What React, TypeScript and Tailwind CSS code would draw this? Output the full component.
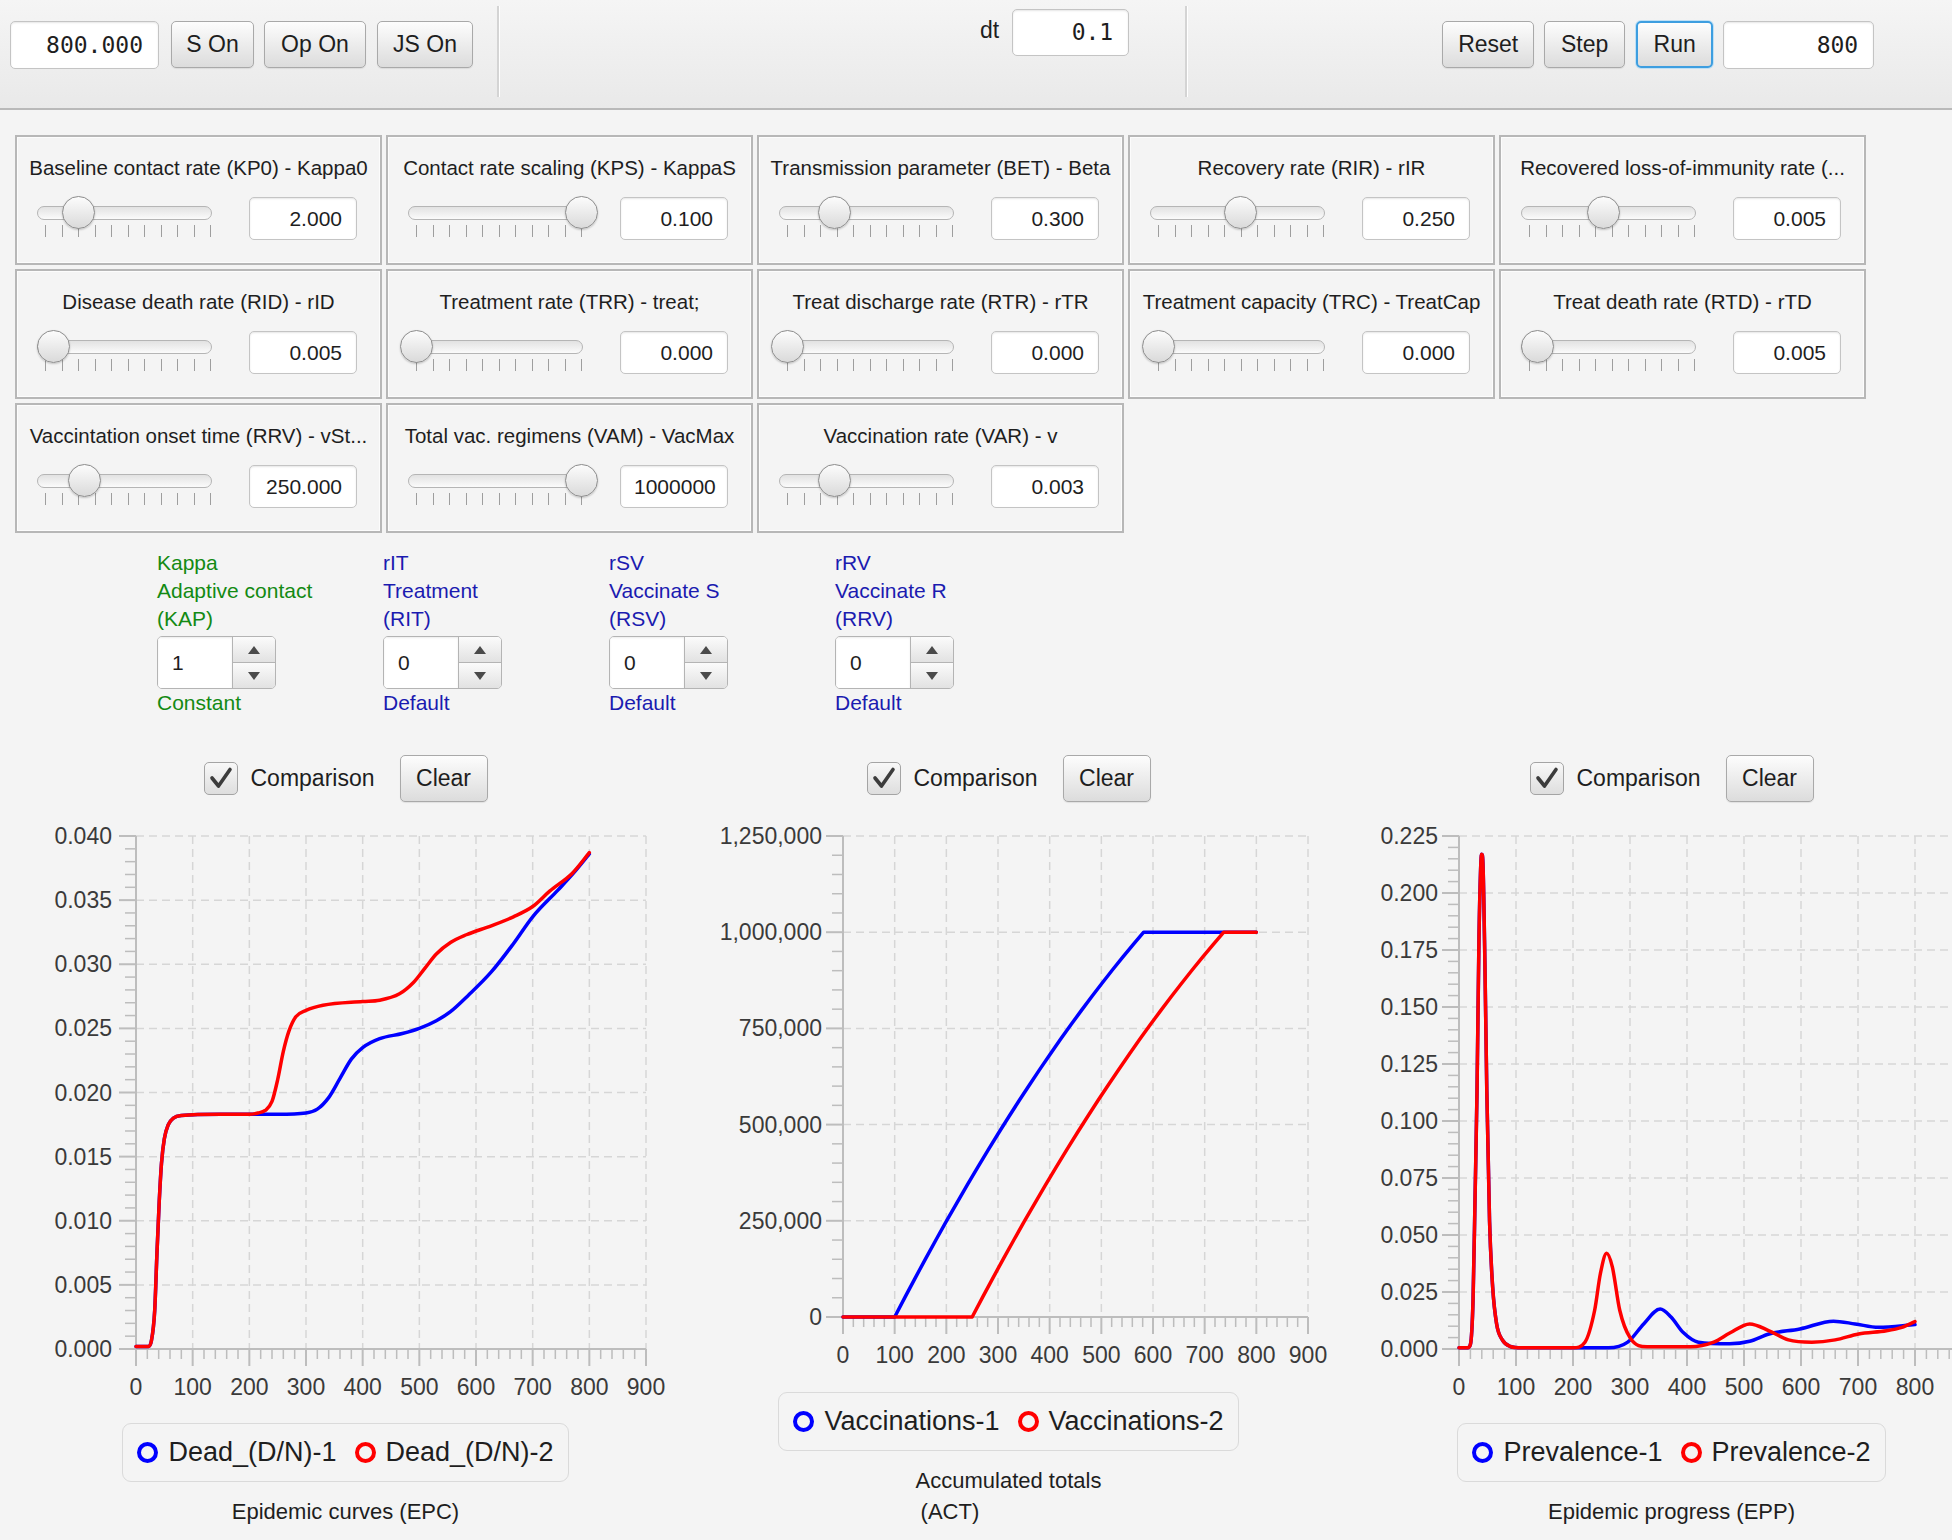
import React from 'react';

type Pt = [number, number];

interface Part {
  pts: Pt[];
  linear?: boolean;
}

interface Series {
  color: string;
  parts: Part[];
}

interface ChartDef {
  id: string;
  height: number;
  axisX: number;
  plotRight: number;
  plotTop: number;
  plotBottom: number;
  labelRight: number;
  xLabelMax: number;
  yMax: number;
  yStep: number;
  fmt: (v: number) => string;
  series: Series[];
  legend: string[];
  title: string[];
}

const panels = [
  { title: 'Baseline contact rate (KP0) - Kappa0', value: '2.000', frac: 0.2 },
  { title: 'Contact rate scaling (KPS) - KappaS', value: '0.100', frac: 1 },
  { title: 'Transmission parameter (BET) - Beta', value: '0.300', frac: 0.29 },
  { title: 'Recovery rate (RIR) - rIR', value: '0.250', frac: 0.5 },
  { title: 'Recovered loss-of-immunity rate (...', value: '0.005', frac: 0.45 },
  { title: 'Disease death rate (RID) - rID', value: '0.005', frac: 0.05 },
  { title: 'Treatment rate (TRR) - treat;', value: '0.000', frac: 0 },
  { title: 'Treat discharge rate (RTR) - rTR', value: '0.000', frac: 0 },
  { title: 'Treatment capacity (TRC) - TreatCap', value: '0.000', frac: 0 },
  { title: 'Treat death rate (RTD) - rTD', value: '0.005', frac: 0.05 },
  { title: 'Vaccintation onset time (RRV) - vSt...', value: '250.000', frac: 0.24 },
  { title: 'Total vac. regimens (VAM) - VacMax', value: '1000000', frac: 1, clip: true },
  { title: 'Vaccination rate (VAR) - v', value: '0.003', frac: 0.29 },
];

const spinners = [
  { lines: ['Kappa', 'Adaptive contact', '(KAP)'], value: '1', foot: 'Constant', green: true },
  { lines: ['rIT', 'Treatment', '(RIT)'], value: '0', foot: 'Default', green: false },
  { lines: ['rSV', 'Vaccinate S', '(RSV)'], value: '0', foot: 'Default', green: false },
  { lines: ['rRV', 'Vaccinate R', '(RRV)'], value: '0', foot: 'Default', green: false },
];

const firstPeak: Pt[] = [
  [0, 0.0005], [15, 0.0006], [20, 0.002], [24.7, 0.022], [28.2, 0.067], [31.6, 0.113],
  [35.1, 0.181], [38.5, 0.214], [40, 0.217], [42, 0.213], [45.4, 0.17], [48.8, 0.113],
  [53.6, 0.056], [59.1, 0.027], [66, 0.011], [76, 0.004], [90, 0.0011], [110, 0.0005],
];

const deadStart: Pt[] = [
  [0, 0.0002], [22, 0.0002], [27, 0.0006], [33, 0.003], [37, 0.0075], [41, 0.0115],
  [45, 0.0145], [50, 0.0164], [57, 0.0175], [66, 0.018], [80, 0.0182], [150, 0.0183], [200, 0.0183],
];

// slightly concave ramp from (x0, 0) to (x1, 1M)
function ramp(x0: number, x1: number): Pt[] {
  const a = 1.25;
  const pts: Pt[] = [];
  for (let i = 0; i <= 24; i++) {
    const u = i / 24;
    pts.push([x0 + u * (x1 - x0), 1000000 * (a * u + (1 - a) * u * u)]);
  }
  return pts;
}

const charts: ChartDef[] = [
  {
    id: 'epc',
    height: 590,
    axisX: 122,
    plotRight: 632,
    plotTop: 16,
    plotBottom: 529,
    labelRight: 98,
    xLabelMax: 900,
    yMax: 0.04,
    yStep: 0.005,
    fmt: (v) => v.toFixed(3),
    series: [
      {
        color: '#0000ff',
        parts: [
          {
            pts: [
              ...deadStart,
              [250, 0.0183], [300, 0.0184], [320, 0.0187], [340, 0.0196], [360, 0.0211], [380, 0.0226],
              [400, 0.0235], [430, 0.0242], [470, 0.0246], [500, 0.025], [530, 0.0256], [555, 0.0263],
              [587, 0.0276], [627, 0.0294], [666, 0.0316], [700, 0.0337], [745, 0.0358], [772, 0.0371], [800, 0.0386],
            ],
          },
        ],
      },
      {
        color: '#ff0000',
        parts: [
          {
            pts: [
              ...deadStart,
              [215, 0.0184], [228, 0.0186], [240, 0.0193], [250, 0.021], [260, 0.0232], [270, 0.0248],
              [282, 0.0259], [300, 0.0264], [330, 0.0268], [400, 0.0271], [430, 0.0272], [465, 0.0277],
              [490, 0.0286], [510, 0.0297], [530, 0.0308], [555, 0.0317], [583, 0.0323], [627, 0.033],
              [666, 0.0337], [700, 0.0345], [730, 0.0357], [770, 0.0371], [800, 0.0387],
            ],
          },
        ],
      },
    ],
    legend: ['Dead_(D/N)-1', 'Dead_(D/N)-2'],
    title: ['Epidemic curves (EPC)'],
  },
  {
    id: 'act',
    height: 559,
    axisX: 166,
    plotRight: 631,
    plotTop: 16,
    plotBottom: 497,
    labelRight: 145,
    xLabelMax: 900,
    yMax: 1250000,
    yStep: 250000,
    fmt: (v) => Math.round(v).toLocaleString('en-US'),
    series: [
      {
        color: '#0000ff',
        parts: [{ linear: true, pts: [[0, 0], ...ramp(100, 582), [800, 1000000]] }],
      },
      {
        color: '#ff0000',
        parts: [{ linear: true, pts: [[0, 0], ...ramp(250, 737), [800, 1000000]] }],
      },
    ],
    legend: ['Vaccinations-1', 'Vaccinations-2'],
    title: ['Accumulated totals', '(ACT)'],
  },
  {
    id: 'epp',
    height: 590,
    axisX: 119,
    plotRight: 632,
    plotTop: 16,
    plotBottom: 529,
    labelRight: 98,
    xLabelMax: 800,
    yMax: 0.225,
    yStep: 0.025,
    fmt: (v) => v.toFixed(3),
    series: [
      {
        color: '#0000ff',
        parts: [
          {
            pts: [
              ...firstPeak,
              [262, 0.0005], [296, 0.003], [324, 0.011], [353, 0.0175], [372, 0.014], [393, 0.0073],
              [420, 0.003], [475, 0.0023], [510, 0.0034], [544, 0.0066], [598, 0.0088], [657, 0.0122],
              [695, 0.011], [736, 0.0095], [800, 0.0107],
            ],
          },
        ],
      },
      {
        color: '#ff0000',
        parts: [
          {
            pts: [
              ...firstPeak,
              [200, 0.0005], [221, 0.003], [238, 0.017], [248, 0.033], [259, 0.042], [269, 0.036],
              [282, 0.017], [300, 0.005], [330, 0.001], [406, 0.001], [447, 0.003], [475, 0.007],
              [510, 0.011], [544, 0.008], [578, 0.004], [619, 0.003], [660, 0.004], [701, 0.0066],
              [750, 0.008], [777, 0.0095], [800, 0.012],
            ],
          },
        ],
      },
    ],
    legend: ['Prevalence-1', 'Prevalence-2'],
    title: ['Epidemic progress (EPP)'],
  },
];

// monotone cubic through pixel points
function monotonePath(pts: Pt[]): string {
  const n = pts.length;
  const xs = pts.map((p) => p[0]);
  const ys = pts.map((p) => p[1]);
  const m: number[] = [];
  for (let i = 0; i < n - 1; i++) m.push((ys[i + 1] - ys[i]) / (xs[i + 1] - xs[i]));
  const t: number[] = new Array(n).fill(0);
  t[0] = m[0];
  t[n - 1] = m[n - 2];
  for (let i = 1; i < n - 1; i++) t[i] = m[i - 1] * m[i] <= 0 ? 0 : (m[i - 1] + m[i]) / 2;
  for (let i = 0; i < n - 1; i++) {
    if (Math.abs(m[i]) < 1e-9) {
      t[i] = 0;
      t[i + 1] = 0;
      continue;
    }
    const a = t[i] / m[i];
    const b = t[i + 1] / m[i];
    const s = a * a + b * b;
    if (s > 9) {
      const k = 3 / Math.sqrt(s);
      t[i] = k * a * m[i];
      t[i + 1] = k * b * m[i];
    }
  }
  let d = `M${xs[0]},${ys[0]}`;
  for (let i = 0; i < n - 1; i++) {
    const h = (xs[i + 1] - xs[i]) / 3;
    d += ` C${xs[i] + h},${ys[i] + t[i] * h} ${xs[i + 1] - h},${ys[i + 1] - t[i + 1] * h} ${xs[i + 1]},${ys[i + 1]}`;
  }
  return d;
}

const Button: React.FC<{ label: string; className?: string }> = ({ label, className = '' }) => (
  <div
    className={`flex h-[47px] items-center justify-center rounded-[5px] border border-[#a9a9a9] bg-linear-to-b from-[#fdfdfd] to-[#dcdcdc] text-[23px] text-[#1e1e1e] shadow-[0_1px_1px_rgba(0,0,0,0.08)] ${className}`}
  >
    {label}
  </div>
);

const Slider: React.FC<{ frac: number }> = ({ frac }) => {
  const left = 8 + frac * 165 - 16.5;
  return (
    <div className="relative w-[175px] pt-[10px]">
      <div className="h-[14px] w-[175px] rounded-full border border-[#b5b5b5] bg-linear-to-b from-[#e2e2e2] to-[#fbfbfb]" />
      <div className="ml-[8px] mt-[5px] flex h-[12px] w-[166px] justify-between">
        {Array.from({ length: 11 }).map((_, i) => (
          <div key={i} className="h-full w-px bg-[#9e9e9e]" />
        ))}
      </div>
      <div
        className="absolute top-0 h-[33px] w-[33px] rounded-full border border-[#8c8c8c] bg-linear-to-b from-[#fcfcfc] to-[#dadada] shadow-[0_1px_2px_rgba(0,0,0,0.2)]"
        style={{ left }}
      />
    </div>
  );
};

const Panel: React.FC<{ title: string; value: string; frac: number; clip?: boolean }> = ({ title, value, frac, clip }) => (
  <div className="h-[130px] w-[367px] border-2 border-[#b7b7b7] bg-[#f4f4f4] pt-[19px] shadow-[inset_0_0_0_1px_#fcfcfc]">
    <div className="h-[24px] overflow-hidden whitespace-nowrap text-center text-[20.5px] leading-[24px] text-[#1e1e1e]">{title}</div>
    <div className="flex items-start pl-[20px]">
      <div className="mt-[16px]">
        <Slider frac={frac} />
      </div>
      <div
        className={`ml-[37px] mt-[17px] flex h-[43px] w-[108px] items-center overflow-hidden rounded-[5px] border border-[#c4c4c4] bg-white text-[21px] text-[#1e1e1e] shadow-[inset_0_1px_2px_rgba(0,0,0,0.1)] ${
          clip ? 'justify-start pl-[13px]' : 'justify-end pr-[14px]'
        }`}
      >
        <span className="whitespace-nowrap">{value}</span>
      </div>
    </div>
  </div>
);

const Spinner: React.FC<{ lines: string[]; value: string; foot: string; green: boolean }> = ({ lines, value, foot, green }) => (
  <div className={`w-[226px] text-[21px] leading-[28px] ${green ? 'text-[#138a13]' : 'text-[#1b1bb0]'}`}>
    {lines.map((l) => (
      <div key={l}>{l}</div>
    ))}
    <div className="mt-[3px] flex h-[53px] w-[119px] overflow-hidden rounded-[5px] border border-[#b4b4b4]">
      <div className="flex flex-1 items-center bg-white pl-[14px] text-[#1e1e1e] shadow-[inset_0_1px_2px_rgba(0,0,0,0.08)]">{value}</div>
      <div className="flex w-[43px] flex-col border-l border-[#b4b4b4]">
        <div className="flex flex-1 items-center justify-center border-b border-[#b4b4b4] bg-linear-to-b from-[#fbfbfb] to-[#e2e2e2]">
          <svg width="14" height="10" viewBox="0 0 14 10">
            <polygon points="7,1 13,9 1,9" fill="#4a4a4a" />
          </svg>
        </div>
        <div className="flex flex-1 items-center justify-center bg-linear-to-b from-[#fbfbfb] to-[#e2e2e2]">
          <svg width="14" height="10" viewBox="0 0 14 10">
            <polygon points="1,1 13,1 7,9" fill="#4a4a4a" />
          </svg>
        </div>
      </div>
    </div>
    <div>{foot}</div>
  </div>
);

const Chart: React.FC<{ c: ChartDef }> = ({ c }) => {
  const sx = (v: number) => c.axisX + (v / 900) * (c.plotRight - c.axisX);
  const sy = (v: number) => c.plotBottom - (v / c.yMax) * (c.plotBottom - c.plotTop);
  const nY = Math.round(c.yMax / c.yStep);
  const xMajor = Array.from({ length: 10 }, (_, i) => i * 100);
  const xMinor = Array.from({ length: 46 }, (_, i) => i * 20).filter((v) => v % 100 !== 0);
  const yMajor = Array.from({ length: nY + 1 }, (_, i) => i * c.yStep);
  const yMinor: number[] = [];
  for (let i = 0; i < nY * 5; i++) if (i % 5 !== 0) yMinor.push((i * c.yStep) / 5);
  const axisColor = '#bdbdbd';
  return (
    <svg width={663} height={c.height} className="block">
      {yMajor.slice(1).map((v) => (
        <line key={`gy${v}`} x1={c.axisX} x2={c.plotRight} y1={sy(v)} y2={sy(v)} stroke="#d6d6d6" strokeWidth={1.5} strokeDasharray="8 5" />
      ))}
      {xMajor.slice(1).map((v) => (
        <line key={`gx${v}`} x1={sx(v)} x2={sx(v)} y1={c.plotTop} y2={c.plotBottom} stroke="#d6d6d6" strokeWidth={1.5} strokeDasharray="8 5" />
      ))}
      <line x1={c.axisX} x2={c.axisX} y1={c.plotTop} y2={c.plotBottom} stroke={axisColor} strokeWidth={2} />
      <line x1={c.axisX} x2={c.plotRight} y1={c.plotBottom} y2={c.plotBottom} stroke={axisColor} strokeWidth={2} />
      {yMajor.map((v) => (
        <line key={`ty${v}`} x1={c.axisX - 17} x2={c.axisX} y1={sy(v)} y2={sy(v)} stroke={axisColor} strokeWidth={2} />
      ))}
      {yMinor.map((v) => (
        <line key={`my${v}`} x1={c.axisX - 11} x2={c.axisX} y1={sy(v)} y2={sy(v)} stroke={axisColor} strokeWidth={1.5} />
      ))}
      {xMajor.map((v) => (
        <line key={`tx${v}`} x1={sx(v)} x2={sx(v)} y1={c.plotBottom} y2={c.plotBottom + 17} stroke={axisColor} strokeWidth={2} />
      ))}
      {xMinor.map((v) => (
        <line key={`mx${v}`} x1={sx(v)} x2={sx(v)} y1={c.plotBottom} y2={c.plotBottom + 10} stroke={axisColor} strokeWidth={1.5} />
      ))}
      {yMajor.map((v) => (
        <text key={`ly${v}`} x={c.labelRight} y={sy(v)} textAnchor="end" dominantBaseline="central" fontSize={23} fill="#3a3a3a">
          {c.fmt(v)}
        </text>
      ))}
      {xMajor
        .filter((v) => v <= c.xLabelMax)
        .map((v) => (
          <text key={`lx${v}`} x={sx(v)} y={c.plotBottom + 38} textAnchor="middle" dominantBaseline="central" fontSize={23} fill="#3a3a3a">
            {v}
          </text>
        ))}
      {c.series.map((s, i) => {
        const d = s.parts
          .map((part) => {
            const px: Pt[] = part.pts.map(([x, y]) => [sx(x), sy(y)]);
            return part.linear ? `M${px.map((p) => `${p[0]},${p[1]}`).join(' L')}` : monotonePath(px);
          })
          .join(' ');
        return <path key={i} d={d} fill="none" stroke={s.color} strokeWidth={3.5} strokeLinejoin="round" strokeLinecap="round" />;
      })}
    </svg>
  );
};

const ChartColumn: React.FC<{ c: ChartDef }> = ({ c }) => (
  <div className="flex w-[663px] shrink-0 flex-col items-center">
    <div className="flex h-[48px] items-center">
      <div className="flex h-[33px] w-[34px] items-center justify-center rounded-[5px] border border-[#a4a4a4] bg-linear-to-b from-[#f8f8f8] to-[#dedede]">
        <svg width="26" height="24" viewBox="0 0 26 24">
          <path d="M4 12 L10.5 20 L22 3.5" fill="none" stroke="#3c3c3c" strokeWidth={3.6} strokeLinejoin="round" strokeLinecap="round" />
        </svg>
      </div>
      <span className="ml-[13px] text-[23px] text-[#1e1e1e]">Comparison</span>
      <Button label="Clear" className="ml-[25px] w-[88px]" />
    </div>
    <div className="mt-[18px]">
      <Chart c={c} />
    </div>
    <div className="mt-[13px] flex h-[59px] items-center rounded-[9px] border border-[#dadada] px-[14px] text-[27px] text-[#1e1e1e]">
      {c.legend.map((l, i) => (
        <div key={l} className={`flex items-center ${i > 0 ? 'ml-[18px]' : ''}`}>
          <div className={`mr-[10px] h-[21px] w-[21px] rounded-full border-[4px] ${i === 0 ? 'border-[#0000ff]' : 'border-[#ff0000]'}`} />
          <span>{l}</span>
        </div>
      ))}
    </div>
    <div className="mt-[14px] text-left text-[22px] leading-[31px] text-[#1e1e1e]">
      {c.title.map((t, i) => (
        <div key={t} className={i > 0 ? 'pl-[5px]' : ''}>
          {t}
        </div>
      ))}
    </div>
  </div>
);

export default function App() {
  return (
    <div className="h-[1540px] w-[1952px] overflow-hidden bg-[#f4f4f4] font-['Liberation_Sans',Arial,sans-serif] text-[#1e1e1e]">
      {/* toolbar */}
      <div className="flex h-[110px] items-start border-b-2 border-[#b9b9b9] bg-linear-to-b from-[#f5f5f5] to-[#e9e9e9] pl-[10px]">
        <div className="mt-[21px] flex h-[48px] w-[149px] items-center justify-end rounded-[5px] border border-[#c4c4c4] bg-white pr-[15px] font-['DejaVu_Sans_Mono',monospace] text-[23px] shadow-[inset_0_1px_2px_rgba(0,0,0,0.1)]">
          800.000
        </div>
        <Button label="S On" className="ml-[12px] mt-[21px] w-[83px]" />
        <Button label="Op On" className="ml-[10px] mt-[21px] w-[102px]" />
        <Button label="JS On" className="ml-[11px] mt-[21px] w-[96px]" />
        <div className="ml-[24px] mt-[6px] h-[91px] w-[2px] bg-[#d4d4d4] shadow-[1px_0_0_#ffffff]" />
        <div className="ml-[481px] mt-[13px] text-[23px]">dt</div>
        <div className="ml-[13px] mt-[9px] flex h-[47px] w-[117px] items-center justify-end rounded-[5px] border border-[#c4c4c4] bg-white pr-[15px] font-['DejaVu_Sans_Mono',monospace] text-[23px] shadow-[inset_0_1px_2px_rgba(0,0,0,0.1)]">
          0.1
        </div>
        <div className="ml-[56px] mt-[6px] h-[91px] w-[2px] bg-[#d4d4d4] shadow-[1px_0_0_#ffffff]" />
        <Button label="Reset" className="ml-[255px] mt-[21px] w-[92px]" />
        <Button label="Step" className="ml-[10px] mt-[21px] w-[81px]" />
        <div className="ml-[11px] mt-[21px] flex h-[47px] w-[77px] items-center justify-center rounded-[5px] border-2 border-[#3d9ee0] bg-linear-to-b from-[#fdfdfd] to-[#dcdcdc] text-[23px] shadow-[0_0_0_1px_#bfe0f5]">
          Run
        </div>
        <div className="ml-[10px] mt-[21px] flex h-[48px] w-[151px] items-center justify-end rounded-[5px] border border-[#c4c4c4] bg-white pr-[15px] font-['DejaVu_Sans_Mono',monospace] text-[23px] shadow-[inset_0_1px_2px_rgba(0,0,0,0.1)]">
          800
        </div>
      </div>

      <div className="pl-[15px] pt-[25px]">
        {/* parameter sliders */}
        <div className="grid grid-cols-[repeat(5,367px)] gap-[4px]">
          {panels.map((p) => (
            <Panel key={p.title} {...p} />
          ))}
        </div>

        {/* model option spinners */}
        <div className="mt-[16px] flex pl-[142px]">
          {spinners.map((s) => (
            <Spinner key={s.lines[0]} {...s} />
          ))}
        </div>

        {/* charts */}
        <div className="-ml-px mt-[37px] flex">
          {charts.map((c) => (
            <ChartColumn key={c.id} c={c} />
          ))}
        </div>
      </div>
    </div>
  );
}
